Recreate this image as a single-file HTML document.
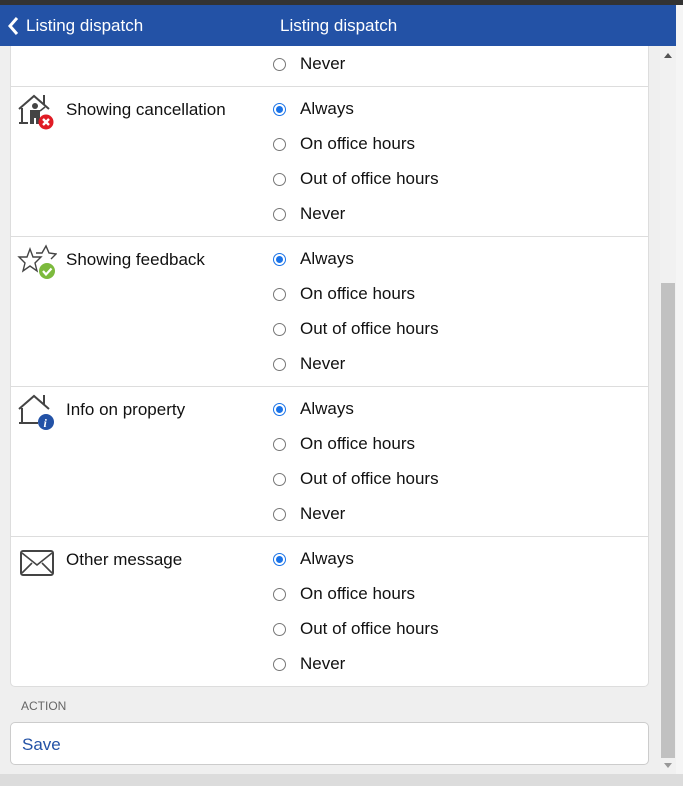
<!DOCTYPE html>
<html><head><style>
*{margin:0;padding:0;box-sizing:border-box}
body{width:683px;height:786px;overflow:hidden;background:#efefef;font-family:"Liberation Sans",sans-serif;position:relative}
.top{position:absolute;left:0;top:0;width:683px;height:5px;background:#333}
.hdr{position:absolute;left:0;top:5px;width:676px;height:41px;background:#2352a6;color:#fff;font-size:17px;z-index:5}
.hdr .b{position:absolute;left:26px;top:11px}
.hdr .t{position:absolute;left:280px;top:11px}
.rs{position:absolute;left:676px;top:5px;width:7px;height:781px;background:#f5f5f5}
.sb{position:absolute;left:660px;top:46px;width:16px;height:728px;background:#f1f1f1}
.thumb{position:absolute;left:661px;top:283px;width:14px;height:475px;background:#c1c1c1}
.bot{position:absolute;left:0;top:774px;width:683px;height:12px;background:#dcdcdc}
.card{position:absolute;left:10px;top:46px;width:639px;height:641px;background:#fff;border:1px solid #ddd;border-top:none;border-radius:0 0 5px 5px}
.sep{position:absolute;left:10px;width:639px;height:1px;background:#ddd}
.opt{position:absolute;left:273px;font-size:17px;color:#111;height:20px;line-height:20px}
.opt i{position:absolute;left:0;top:4px;width:13px;height:13px;border:1px solid #777;border-radius:50%}
.opt i.on{border:1px solid #1a73e8}
.opt i.on:after{content:"";position:absolute;left:2px;top:2px;width:7px;height:7px;border-radius:50%;background:#1a73e8}
.opt span{position:absolute;left:27px;white-space:nowrap}
.ttl{position:absolute;left:66px;font-size:17px;color:#111}
.ico{position:absolute;left:17px}
.act{position:absolute;left:21px;top:699px;font-size:12px;color:#666}
.save{position:absolute;left:10px;top:722px;width:639px;height:43px;background:#fff;border:1px solid #ccc;border-radius:5px;color:#2352a6;font-size:17px;padding:12px 0 0 11px}
</style></head><body>
<div class="top"></div>
<div class="hdr"><svg style="position:absolute;left:7px;top:11px" width="12" height="20" viewBox="0 0 12 20"><path d="M10 2 L3 10 L10 18" stroke="#fff" stroke-width="3" fill="none"/></svg><span class="b">Listing dispatch</span><span class="t">Listing dispatch</span></div>
<div class="rs"></div>
<div class="sb"></div>
<div class="thumb"></div>
<svg style="position:absolute;left:664px;top:53px" width="8" height="6"><path d="M0 5 L4 0 L8 5Z" fill="#555"/></svg>
<svg style="position:absolute;left:664px;top:763px" width="8" height="6"><path d="M0 0 L4 5 L8 0Z" fill="#999"/></svg>
<div class="bot"></div>
<div class="card"></div>
<div class="sep" style="top:86px"></div>
<div class="sep" style="top:236px"></div>
<div class="sep" style="top:386px"></div>
<div class="sep" style="top:536px"></div>

<div class="opt" style="top:54px"><i></i><span>Never</span></div>

<svg class="ico" style="top:93px" width="40" height="38" viewBox="0 0 40 38"><path d="M2 16 L17 3 L32 16" stroke="#444" stroke-width="2" fill="none"/><path d="M27 2 v10" stroke="#444" stroke-width="2"/><path d="M5 15 v15 M2 30 h9" stroke="#444" stroke-width="2"/><circle cx="18" cy="13" r="3" fill="#444"/><rect x="13" y="17" width="10" height="8" fill="#444"/><rect x="13" y="24" width="4" height="7" fill="#444"/><rect x="19" y="24" width="4" height="7" fill="#444"/><path d="M23 18 l5 -4" stroke="#444" stroke-width="1.5"/><circle cx="29" cy="29" r="7.5" fill="#e01b24"/><path d="M26 26 l6 6 M32 26 l-6 6" stroke="#fff" stroke-width="2.4"/></svg>
<div class="ttl" style="top:100px">Showing cancellation</div>
<div class="opt" style="top:99px"><i class="on"></i><span>Always</span></div>
<div class="opt" style="top:134px"><i></i><span>On office hours</span></div>
<div class="opt" style="top:169px"><i></i><span>Out of office hours</span></div>
<div class="opt" style="top:204px"><i></i><span>Never</span></div>

<svg class="ico" style="top:244px" width="40" height="36" viewBox="0 0 40 36"><path d="M2 13 L10 13 L13 5 L16 13 L24 13 L18 19 L20 27 L13 22 L6 27 L8 19Z" stroke="#444" stroke-width="1.4" fill="none"/><path d="M19 9 L25 9 L29 2 L32 9 L39 10 L34 15" stroke="#444" stroke-width="1.4" fill="none"/><circle cx="30" cy="27" r="8" fill="#7cba3d"/><path d="M26 27 l3 3.5 l5.5 -6" stroke="#fff" stroke-width="2.2" fill="none"/></svg>
<div class="ttl" style="top:250px">Showing feedback</div>
<div class="opt" style="top:249px"><i class="on"></i><span>Always</span></div>
<div class="opt" style="top:284px"><i></i><span>On office hours</span></div>
<div class="opt" style="top:319px"><i></i><span>Out of office hours</span></div>
<div class="opt" style="top:354px"><i></i><span>Never</span></div>

<svg class="ico" style="top:393px" width="40" height="38" viewBox="0 0 40 38"><path d="M2 16 L17 3 L32 16" stroke="#444" stroke-width="2" fill="none"/><path d="M27 2 v10" stroke="#444" stroke-width="2"/><path d="M5 15 v15 M2 30 h19" stroke="#444" stroke-width="2"/><circle cx="29" cy="29" r="8" fill="#2352a6"/><text x="26.5" y="34" font-size="12" font-style="italic" font-weight="bold" fill="#fff" font-family="Liberation Serif">i</text></svg>
<div class="ttl" style="top:400px">Info on property</div>
<div class="opt" style="top:399px"><i class="on"></i><span>Always</span></div>
<div class="opt" style="top:434px"><i></i><span>On office hours</span></div>
<div class="opt" style="top:469px"><i></i><span>Out of office hours</span></div>
<div class="opt" style="top:504px"><i></i><span>Never</span></div>

<svg class="ico" style="top:548px" width="40" height="30" viewBox="0 0 40 30"><rect x="4" y="3" width="32" height="24" rx="2" stroke="#444" stroke-width="2" fill="none"/><path d="M5 5 L20 17 L35 5 M5 25 L15 15 M35 25 L25 15" stroke="#444" stroke-width="1.6" fill="none"/></svg>
<div class="ttl" style="top:550px">Other message</div>
<div class="opt" style="top:549px"><i class="on"></i><span>Always</span></div>
<div class="opt" style="top:584px"><i></i><span>On office hours</span></div>
<div class="opt" style="top:619px"><i></i><span>Out of office hours</span></div>
<div class="opt" style="top:654px"><i></i><span>Never</span></div>

<div class="act">ACTION</div>
<div class="save">Save</div>
</body></html>
